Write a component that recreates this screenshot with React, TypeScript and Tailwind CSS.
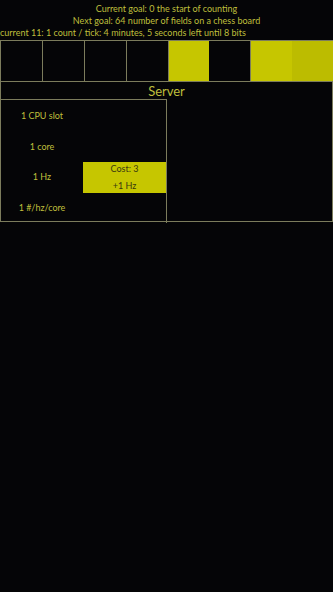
export default function App() {
  const bits = [0, 0, 0, 0, 1, 0, 1, 1];
  const rows = ["1 CPU slot", "1 core", "1 Hz", "1 #/hz/core"];
  return (
    <div
      className="w-[333px] h-[592px] bg-[#050507] text-[#bfbf3c] text-[9px] leading-[12px]"
      style={{ fontFamily: 'Lato, "Open Sans", sans-serif' }}
    >
      <div className="pt-[3px] text-center">Current goal: 0 the start of counting</div>
      <div className="text-center">Next goal: 64 number of fields on a chess board</div>
      <div className="whitespace-nowrap">current 11: 1 count / tick: 4 minutes, 5 seconds left until 8 bits</div>
      <div className="mt-[1px] flex h-[42px] border-y border-l border-[#7c7c5c]">
        {bits.map((b, i) => (
          <div
            key={i}
            className={
              b
                ? i === 7
                  ? "flex-1 bg-[#bcbc00]"
                  : "flex-1 bg-[#c6c600]"
                : "flex-1 border-r border-[#7c7c5c] bg-[#050507]"
            }
          />
        ))}
      </div>
      <div className="h-[140px] border-x border-b border-[#7c7c5c]">
        <div className="h-[17px] pt-[1px] text-center text-[13px] leading-[17px]">Server</div>
        <div className="flex">
          <div className="w-[166px] border-t border-r border-[#7c7c5c] pt-[1px]">
            {rows.map((r, i) => (
              <div key={r} className="flex h-[30.5px]">
                <div className="flex w-[82px] items-center justify-center">{r}</div>
                {i === 2 && (
                  <div className="flex w-[83px] flex-col items-center justify-between bg-[#c6c600] py-[1px] text-[#3a3a10]">
                    <span>Cost: 3</span>
                    <span>+1 Hz</span>
                  </div>
                )}
              </div>
            ))}
          </div>
        </div>
      </div>
    </div>
  );
}
